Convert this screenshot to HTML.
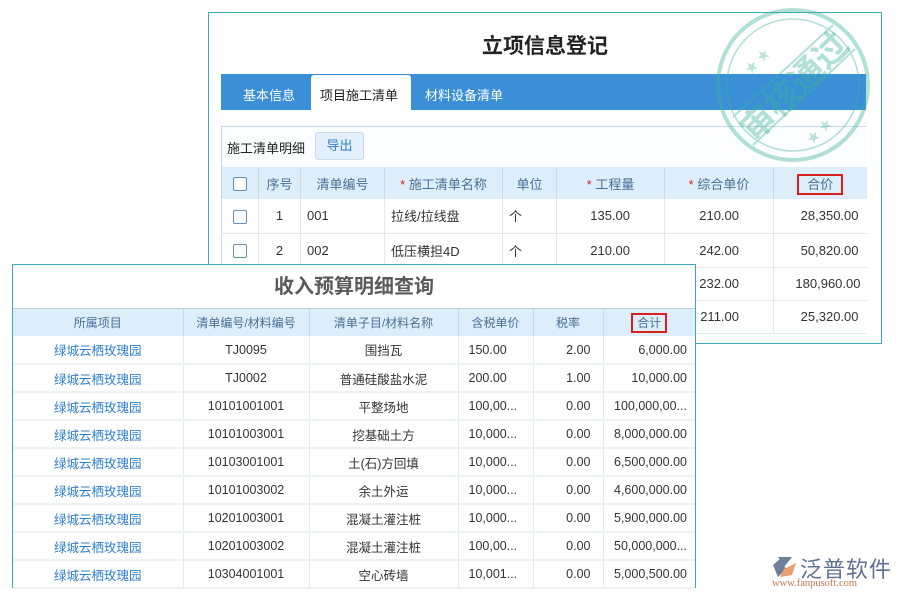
<!DOCTYPE html>
<html><head><meta charset="utf-8"><style>
*{margin:0;padding:0;box-sizing:border-box}
body{width:900px;height:600px;background:#fff;position:relative;overflow:hidden;font-family:"Liberation Sans","Noto Sans CJK SC",sans-serif;font-size:13px;color:#333}
.abs{position:absolute}
table{border-collapse:collapse;table-layout:fixed}
td{overflow:hidden;white-space:nowrap}
.red{color:#e02020}
.box{display:inline-block;width:14px;height:14px;border:1px solid #6a8fb5;border-radius:2px;vertical-align:middle;background:#fff}
.hl{border:2px solid #d92020;padding:1px 8px}
</style></head><body>

<div class="abs" style="left:208px;top:12px;width:674px;height:332px;border:1px solid #3aa9b8;background:#fff"></div>
<div class="abs" style="left:208px;top:30px;width:674px;text-align:center;font-size:21px;font-weight:bold;color:#222">立项信息登记</div>
<div class="abs" style="left:221px;top:74px;width:645px;height:36px;background:#3b8fd6"></div>
<div class="abs" style="left:311px;top:75px;width:100px;height:35px;background:#fff;border-radius:3px 3px 0 0"></div>
<div class="abs" style="left:243px;top:85px;color:#fff;font-size:13px">基本信息</div>
<div class="abs" style="left:320px;top:85px;color:#222;font-size:13px">项目施工清单</div>
<div class="abs" style="left:425px;top:85px;color:#fff;font-size:13px">材料设备清单</div>
<div class="abs" style="left:221px;top:126px;width:645px;height:41px;border-top:1px solid #c8d8e6;border-left:1px solid #c8d8e6;background:#fcfdfe"></div>
<div class="abs" style="left:227px;top:138px;font-size:13px;color:#222">施工清单明细</div>
<div class="abs" style="left:315px;top:132px;width:49px;height:28px;background:#e3effb;border:1px solid #c5dbef;border-radius:3px;color:#2f7fd0;text-align:center;line-height:26px">导出</div>
<table class="abs" style="left:221px;top:167px;width:645px;border-left:1px solid #c8d8e6">
<colgroup><col style="width:37px"><col style="width:42px"><col style="width:84px"><col style="width:118px"><col style="width:54px"><col style="width:108px"><col style="width:109px"><col style="width:93px"></colgroup>
<tr style="height:32px;background:#ddedfa;color:#4a6f98;text-align:center"><td style="border-right:1px solid #c8d8e6"><span class="box"></span></td><td style="border-right:1px solid #c8d8e6">序号</td><td style="border-right:1px solid #c8d8e6">清单编号</td><td style="border-right:1px solid #c8d8e6"><span class="red">*</span> 施工清单名称</td><td style="border-right:1px solid #c8d8e6">单位</td><td style="border-right:1px solid #c8d8e6"><span class="red">*</span> 工程量</td><td style="border-right:1px solid #c8d8e6"><span class="red">*</span> 综合单价</td><td><span class="hl">合价</span></td></tr>
<tr style="height:34px;border-bottom:1px solid #e3e8ee"><td style="text-align:center;border-right:1px solid #e3e8ee"><span class="box"></span></td><td style="text-align:center;border-right:1px solid #e3e8ee">1</td><td style="padding-left:6px;border-right:1px solid #e3e8ee">001</td><td style="padding-left:6px;border-right:1px solid #e3e8ee">拉线/拉线盘</td><td style="padding-left:6px;border-right:1px solid #e3e8ee">个</td><td style="text-align:right;padding-right:34px;border-right:1px solid #e3e8ee">135.00</td><td style="text-align:right;padding-right:34px;border-right:1px solid #e3e8ee">210.00</td><td style="text-align:right;padding-right:8px">28,350.00</td></tr>
<tr style="height:34px;border-bottom:1px solid #e3e8ee"><td style="text-align:center;border-right:1px solid #e3e8ee"><span class="box"></span></td><td style="text-align:center;border-right:1px solid #e3e8ee">2</td><td style="padding-left:6px;border-right:1px solid #e3e8ee">002</td><td style="padding-left:6px;border-right:1px solid #e3e8ee">低压横担4D</td><td style="padding-left:6px;border-right:1px solid #e3e8ee">个</td><td style="text-align:right;padding-right:34px;border-right:1px solid #e3e8ee">210.00</td><td style="text-align:right;padding-right:34px;border-right:1px solid #e3e8ee">242.00</td><td style="text-align:right;padding-right:8px">50,820.00</td></tr>
<tr style="height:33px;border-bottom:1px solid #e3e8ee"><td></td><td></td><td></td><td></td><td></td><td style="border-right:1px solid #e3e8ee"></td><td style="text-align:right;padding-right:34px;border-right:1px solid #e3e8ee">232.00</td><td style="text-align:right;padding-right:6px">180,960.00</td></tr>
<tr style="height:33px;border-bottom:1px solid #e3e8ee"><td></td><td></td><td></td><td></td><td></td><td style="border-right:1px solid #e3e8ee"></td><td style="text-align:right;padding-right:34px;border-right:1px solid #e3e8ee">211.00</td><td style="text-align:right;padding-right:8px">25,320.00</td></tr>
</table>

<svg class="abs" style="left:705px;top:5px" width="175" height="165" viewBox="0 0 175 165">
<g opacity="0.4" stroke="#3db39a" fill="none">
<circle cx="88" cy="80" r="75" stroke-width="4"/>
<circle cx="88" cy="80" r="66" stroke-width="1.5"/>
<line x1="28" y1="112" x2="128" y2="20" stroke-width="2"/>
<line x1="48" y1="140" x2="150" y2="44" stroke-width="2"/>
</g>
<text x="88" y="94" fill="#3db39a" opacity="0.4" font-size="34" font-weight="bold" text-anchor="middle" transform="rotate(-45 88 80)" font-family="Noto Sans CJK SC,sans-serif">审核通过</text>
<text x="36" y="62" fill="#3db39a" opacity="0.35" font-size="13" transform="rotate(-45 50 55)">★ ★</text>
<text x="98" y="132" fill="#3db39a" opacity="0.35" font-size="13" transform="rotate(-45 112 125)">★ ★</text>
</svg>

<div class="abs" style="left:12px;top:264px;width:684px;height:324px;border:1px solid #3aa9b8;background:#fff"></div>
<div class="abs" style="left:12px;top:270px;width:684px;text-align:center;font-size:20px;font-weight:bold;color:#5a5a5a">收入预算明细查询</div>
<table class="abs" style="left:13px;top:308px;width:682px;font-size:12px">
<colgroup><col style="width:170px"><col style="width:126px"><col style="width:149px"><col style="width:75px"><col style="width:70px"><col style="width:92px"></colgroup>
<tr style="height:27px;background:#ddedfa;color:#4a6f98;text-align:center;border-top:1px solid #b8d0e4"><td style="border-right:1px solid #c8d8e6">所属项目</td><td style="border-right:1px solid #c8d8e6">清单编号/材料编号</td><td style="border-right:1px solid #c8d8e6">清单子目/材料名称</td><td style="border-right:1px solid #c8d8e6">含税单价</td><td style="border-right:1px solid #c8d8e6">税率</td><td><span class="hl" style="padding:1px 4px">合计</span></td></tr>
</table>
<table class="abs" style="left:13px;top:336px;width:682px;font-size:12.5px" id="b">
<colgroup><col style="width:170px"><col style="width:126px"><col style="width:149px"><col style="width:75px"><col style="width:70px"><col style="width:92px"></colgroup>
<tbody style="color:#333">
<tr><td>绿城云栖玫瑰园</td><td>TJ0095</td><td>围挡瓦</td><td>150.00</td><td>2.00</td><td>6,000.00</td></tr>
<tr><td>绿城云栖玫瑰园</td><td>TJ0002</td><td>普通硅酸盐水泥</td><td>200.00</td><td>1.00</td><td>10,000.00</td></tr>
<tr><td>绿城云栖玫瑰园</td><td>10101001001</td><td>平整场地</td><td>100,00...</td><td>0.00</td><td>100,000,00...</td></tr>
<tr><td>绿城云栖玫瑰园</td><td>10101003001</td><td>挖基础土方</td><td>10,000...</td><td>0.00</td><td>8,000,000.00</td></tr>
<tr><td>绿城云栖玫瑰园</td><td>10103001001</td><td>土(石)方回填</td><td>10,000...</td><td>0.00</td><td>6,500,000.00</td></tr>
<tr><td>绿城云栖玫瑰园</td><td>10101003002</td><td>余土外运</td><td>10,000...</td><td>0.00</td><td>4,600,000.00</td></tr>
<tr><td>绿城云栖玫瑰园</td><td>10201003001</td><td>混凝土灌注桩</td><td>10,000...</td><td>0.00</td><td>5,900,000.00</td></tr>
<tr><td>绿城云栖玫瑰园</td><td>10201003002</td><td>混凝土灌注桩</td><td>100,00...</td><td>0.00</td><td>50,000,000...</td></tr>
<tr><td>绿城云栖玫瑰园</td><td>10304001001</td><td>空心砖墙</td><td>10,001...</td><td>0.00</td><td>5,000,500.00</td></tr>
</tbody></table>
<style>
#b tr{height:28px;border-bottom:2px solid #eef0f2}
#b td{border-right:1px solid #e6eaee;text-align:center}
#b td:nth-child(1){color:#2f7fd0}
#b td:nth-child(4){text-align:left;padding-left:10px}
#b td:nth-child(5){text-align:right;padding-right:12px}
#b td:nth-child(6){text-align:right;padding-right:8px;border-right:none}
</style>

<svg class="abs" style="left:770px;top:555px" width="28" height="24" viewBox="0 0 28 24">
<path d="M8 2 L22 2 L14 12 Z" fill="#6d7f9a"/>
<path d="M3 10 L10 4 L16 14 L8 22 Z" fill="#6d7f9a"/>
<path d="M14 14 L26 8 L22 20 L10 22 Z" fill="#e8a070"/>
</svg>
<div class="abs" style="left:800px;top:552px;font-size:22px;color:#5f7190;letter-spacing:1px">泛普软件</div>
<div class="abs" style="left:772px;top:578px;font-size:10.5px;color:#c77a50;font-family:'Liberation Serif',serif">www.fanpusoft.com</div>
</body></html>
